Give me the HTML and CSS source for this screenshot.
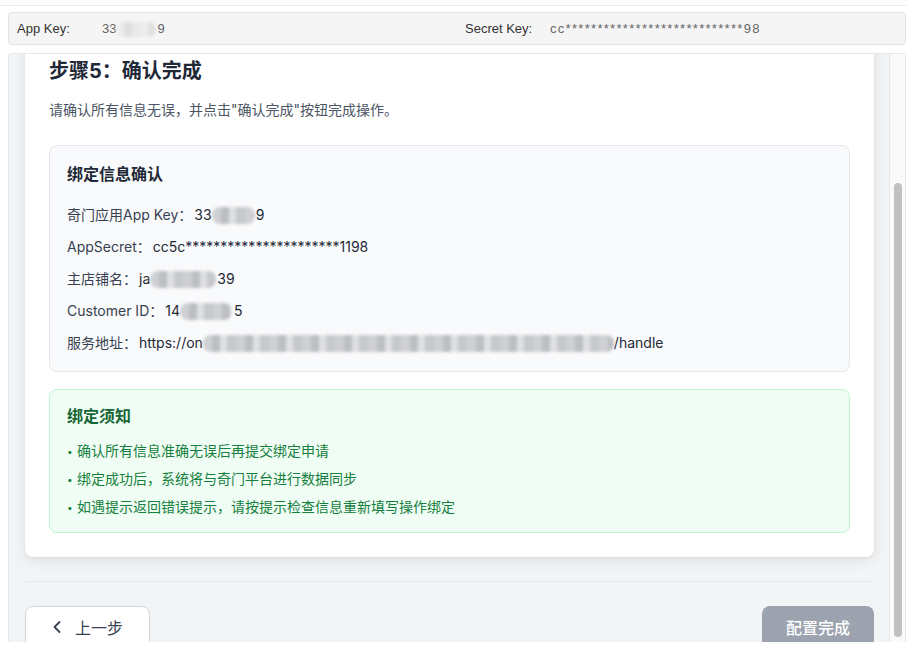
FILE: index.html
```html
<!DOCTYPE html>
<html lang="zh-CN">
<head>
<meta charset="utf-8">
<title>步骤5：确认完成</title>
<link rel="stylesheet" href="styles.css">
</head>
<body>
<div class="topline"></div>
<div class="keys">
  <div class="kv"><span class="k">App Key:</span><span class="v">33<span class="mask mask-light mk-top"></span>9</span></div>
  <div class="kv"><span class="k">Secret Key:</span><span class="v secret">cc****************************98</span></div>
</div>
<div class="panel">
  <div class="viewport" id="viewport">
    <div class="card">
      <h2 class="title">步骤5：确认完成</h2>
      <p class="desc">请确认所有信息无误，并点击"确认完成"按钮完成操作。</p>
      <div class="info">
        <h3 class="info-title">绑定信息确认</h3>
        <div class="row">奇门应用App Key：<span class="val">33<span class="mask mk-1"></span>9</span></div>
        <div class="row">AppSecret：<span class="val">cc5c**********************1198</span></div>
        <div class="row">主店铺名：<span class="val">ja<span class="mask mk-3"></span>39</span></div>
        <div class="row">Customer ID：<span class="val">14<span class="mask mk-4"></span>5</span></div>
        <div class="row">服务地址：<span class="val">https://on<span class="mask mk-5"></span>/handle</span></div>
      </div>
      <div class="notice">
        <h3 class="notice-title">绑定须知</h3>
        <ul class="notice-list">
          <li><span class="dot">•</span>确认所有信息准确无误后再提交绑定申请</li>
          <li><span class="dot">•</span>绑定成功后，系统将与奇门平台进行数据同步</li>
          <li><span class="dot">•</span>如遇提示返回错误提示，请按提示检查信息重新填写操作绑定</li>
        </ul>
      </div>
    </div>
    <div class="footer">
      <button class="btn btn-back" type="button">
        <svg class="chev" width="10" height="16" viewBox="0 0 10 16"><path d="M7.5 3 L2.5 8 L7.5 13" fill="none" stroke="#374151" stroke-width="1.8" stroke-linecap="round" stroke-linejoin="round"/></svg>
        <span>上一步</span>
      </button>
      <button class="btn btn-done" type="button">配置完成</button>
    </div>
  </div>
  <div class="track"><div class="thumb"></div></div>
</div>
<script src="script.js"></script>
</body>
</html>
```
FILE: styles.css
```css
html, body {
  margin: 0;
  padding: 0;
}
body {
  background: #ffffff;
  font-family: Inter, "Noto Sans CJK SC", sans-serif;
  height: 658px;
  overflow: hidden;
}
.topline {
  height: 5px;
  border-bottom: 1px solid #ececec;
  margin-right: 3px;
}
.keys {
  margin: 6px 3px 0 8px;
  height: 31px;
  border: 1px solid #e3e3e3;
  border-radius: 4px;
  background: #f5f5f5;
  display: grid;
  grid-template-columns: 1fr 1fr;
  column-gap: 16px;
  padding: 0 8px;
  align-items: center;
  font-family: "Liberation Sans", "Noto Sans CJK SC", sans-serif;
  font-size: 13px;
}
.kv {
  display: flex;
  align-items: center;
}
.k {
  width: 85px;
  color: #333333;
}
.v {
  color: #666666;
}
.secret {
  letter-spacing: 1.3px;
}
.panel {
  margin: 8px 3px 0 8px;
  height: 588px;
  border: 1px solid #e5e7eb;
  border-bottom: none;
  border-radius: 4px 4px 0 0;
  display: flex;
  background: #f3f4f6;
}
.viewport {
  flex: 1;
  overflow: hidden;
  padding: 16px 15px 16px 16px;
}
.track {
  width: 15px;
  border-left: 1px solid #e8e8e8;
  background: #fafafa;
}
.thumb {
  width: 8px;
  height: 454px;
  margin: 129px auto 0;
  background: #c1c1c1;
  border-radius: 4px;
}
.card {
  background: #ffffff;
  border-radius: 8px;
  box-shadow: 0 4px 14px rgba(0, 0, 0, 0.08), 0 1px 3px rgba(0, 0, 0, 0.05);
  padding: 24px;
}
.title {
  margin: 0 0 15px;
  font-size: 20px;
  line-height: 28px;
  font-weight: 700;
  color: #1f2937;
}
.desc {
  margin: 0 0 25px;
  font-size: 14px;
  line-height: 20px;
  color: #4b5563;
}
.info {
  background: #f9fafb;
  border: 1px solid #e5e7eb;
  border-radius: 8px;
  padding: 16px 17px;
}
.info-title {
  margin: 0 0 17px;
  font-size: 16px;
  line-height: 24px;
  font-weight: 600;
  color: #1f2937;
}
.row {
  font-size: 14px;
  line-height: 24px;
  color: #374151;
}
.row + .row {
  margin-top: 8px;
}
.val {
  margin-left: 2px;
  color: #1f2937;
}
.mask {
  display: inline-block;
  height: 17px;
  vertical-align: -4px;
  border-radius: 8px;
  background: repeating-linear-gradient(90deg, #cfd0d3 0 9px, #bcbec2 9px 17px, #dfe0e2 17px 24px, #c6c8cb 24px 33px);
  filter: blur(1.6px);
}
.mask-light {
  height: 15px;
  background: repeating-linear-gradient(90deg, #ececec 0 8px, #e0e0e0 8px 16px, #e8e8e8 16px 24px);
}
.mk-top { width: 40px; margin-right: 1px; }
.mk-1 { width: 43px; margin-right: 1px; }
.mk-3 { width: 66px; margin-right: 1px; }
.mk-4 { width: 52px; margin-right: 2px; }
.mk-5 { width: 411px; }
.notice {
  margin-top: 17px;
  background: #f0fdf4;
  border: 1px solid #bbf7d0;
  border-radius: 8px;
  padding: 14px 17px;
}
.notice-title {
  margin: 0 0 12px;
  font-size: 16px;
  line-height: 24px;
  font-weight: 600;
  color: #166534;
}
.notice-list {
  list-style: none;
  margin: 0;
  padding: 0;
}
.notice-list li {
  font-size: 14px;
  line-height: 22px;
  color: #15803d;
  display: flex;
}
.notice-list li + li {
  margin-top: 6px;
}
.dot {
  width: 10px;
  font-size: 10px;
  font-family: Inter, sans-serif;
}
.footer {
  margin-top: 24px;
  border-top: 1px solid #e5e7eb;
  padding-top: 24px;
  display: flex;
  justify-content: space-between;
  align-items: flex-start;
}
.btn {
  height: 42px;
  border-radius: 8px;
  font-family: Inter, "Noto Sans CJK SC", sans-serif;
  font-size: 16px;
  display: flex;
  align-items: center;
  cursor: pointer;
}
.btn-back {
  padding: 0 26px;
  gap: 13px;
  background: #ffffff;
  border: 1px solid #d1d5db;
  color: #374151;
}
.chev {
  display: block;
}
.btn-done {
  padding: 0 24px;
  border: none;
  background: #9ca3af;
  color: #ffffff;
  font-weight: 500;
}
```
FILE: script.js
```js
document.getElementById('viewport').scrollTop = 37;
```
